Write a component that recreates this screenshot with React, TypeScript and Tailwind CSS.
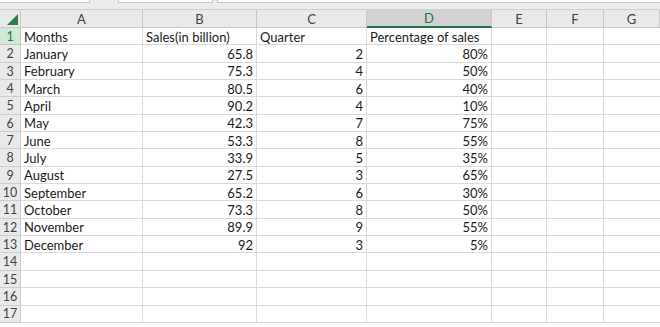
import React from "react";

const rows: [string, string, string, string][] = [
  ["Months", "Sales(in billion)", "Quarter", "Percentage of sales"],
  ["January", "65.8", "2", "80%"],
  ["February", "75.3", "4", "50%"],
  ["March", "80.5", "6", "40%"],
  ["April", "90.2", "4", "10%"],
  ["May", "42.3", "7", "75%"],
  ["June", "53.3", "8", "55%"],
  ["July", "33.9", "5", "35%"],
  ["August", "27.5", "3", "65%"],
  ["September", "65.2", "6", "30%"],
  ["October", "73.3", "8", "50%"],
  ["November", "89.9", "9", "55%"],
  ["December", "92", "3", "5%"],
];

const cols = ["A", "B", "C", "D", "E", "F", "G"];

export default function App() {
  const all: ([string, string, string, string] | null)[] = [];
  for (let i = 0; i < 17; i++) all.push(i < rows.length ? rows[i] : null);
  return (
    <div
      className="w-[660px] h-[327px] overflow-hidden bg-white text-[#1a1a1a] flex flex-col"
      style={{ fontFamily: "Lato, 'Open Sans', sans-serif" }}
    >
      <div className="h-[10px] bg-[#ececec] flex items-start border-b border-[#cfcfcf]">
        <div className="w-[90px] h-[3px] bg-white border-b border-r border-[#c6c6c6]" />
        <div className="w-[28px]" />
        <div className="w-[95px] h-[3px] bg-white border-b border-x border-[#c6c6c6]" />
        <div className="w-[4px]" />
        <div className="w-[443px] h-[3px] bg-white border-b border-l border-[#c6c6c6]" />
      </div>
      <div className="grid grid-cols-[21px_122px_114px_110px_125px_55px_57px_1fr] grid-rows-[18px_repeat(17,17.35px)] text-[13px] leading-none">
        <div className="bg-[#e9e9e9] border-r border-b border-[#c8c8c8] relative">
          <div className="absolute right-[2px] bottom-[2px] w-0 h-0 border-l-[11px] border-l-transparent border-b-[11px] border-b-[#2f7d46]" />
        </div>
        {cols.map((c) => (
          <div
            key={c}
            className={
              c === "D"
                ? "bg-[#d2d2d2] border-r border-[#c8c8c8] border-b-2 border-b-[#217346] flex items-center justify-center pt-[1px] text-[#217346] text-[13px]"
                : "bg-[#e9e9e9] border-r border-b border-[#c8c8c8] flex items-center justify-center pt-[1px] text-[#444] text-[13px]"
            }
          >
            {c}
          </div>
        ))}
        {all.map((r, i) => (
          <React.Fragment key={i}>
            <div
              className={
                i === 0
                  ? "bg-[#cfe9d6] border-r border-b border-[#b9cfc0] flex items-center justify-center pt-[2px] text-[#217346] text-[12.5px]"
                  : "bg-[#e9e9e9] border-r border-b border-[#cdcdcd] flex items-center justify-center pt-[2px] text-[#444] text-[12.5px]"
              }
            >
              {i + 1}
            </div>
            <div className="border-r border-b border-[#dadada] flex items-center pt-[2px] pl-[3px] whitespace-nowrap">
              {r ? r[0] : ""}
            </div>
            <div
              className={
                "border-r border-b border-[#dadada] flex items-center pt-[2px] whitespace-nowrap " +
                (i === 0 ? "pl-[3px]" : "justify-end pr-[3px]")
              }
            >
              {r ? r[1] : ""}
            </div>
            <div
              className={
                "border-r border-b border-[#dadada] flex items-center pt-[2px] whitespace-nowrap " +
                (i === 0 ? "pl-[3px]" : "justify-end pr-[3px]")
              }
            >
              {r ? r[2] : ""}
            </div>
            <div
              className={
                "border-r border-b border-[#dadada] flex items-center pt-[2px] whitespace-nowrap " +
                (i === 0 ? "pl-[3px]" : "justify-end pr-[3px]")
              }
            >
              {r ? r[3] : ""}
            </div>
            <div className="border-r border-b border-[#dadada]" />
            <div className="border-r border-b border-[#dadada]" />
            <div className="border-b border-[#dadada]" />
          </React.Fragment>
        ))}
      </div>
    </div>
  );
}
